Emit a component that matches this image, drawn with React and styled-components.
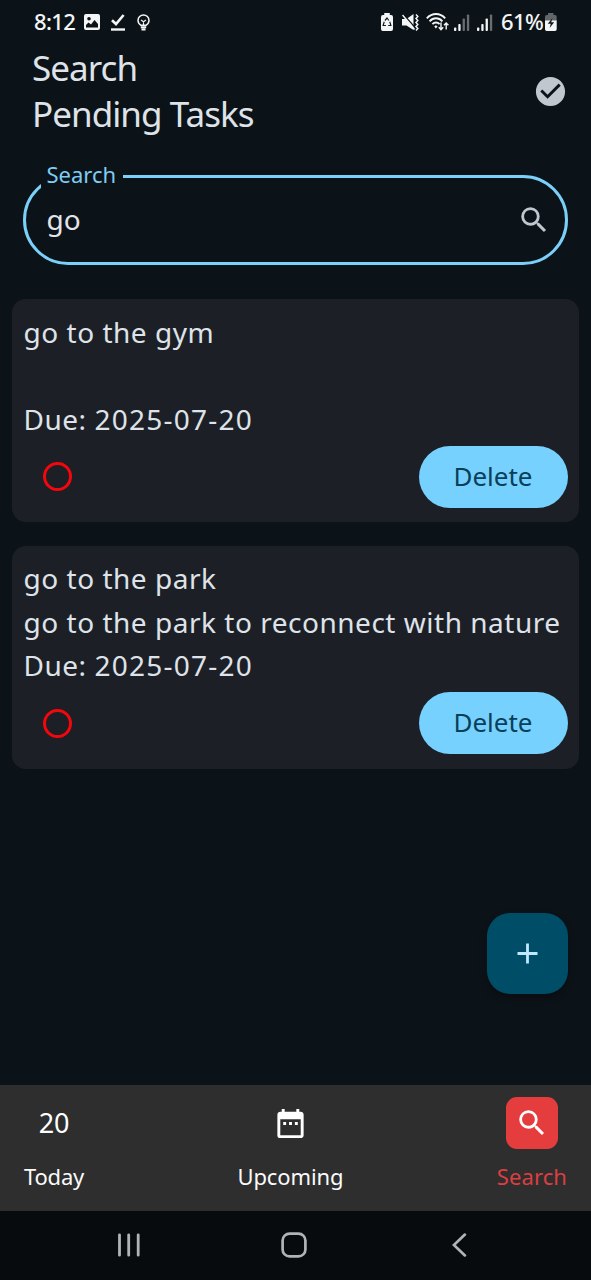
import React from "react";
import styled, { createGlobalStyle } from "styled-components";
import { MdSearch, MdCheckCircle, MdDateRange } from "react-icons/md";

const GlobalStyle = createGlobalStyle`
  * { box-sizing: border-box; }
  body { margin: 0; background: #0c1318; }
`;

const Screen = styled.div`
  width: 591px;
  height: 1280px;
  display: flex;
  flex-direction: column;
  overflow: hidden;
  background: #0c1318;
  color: #dfe3e9;
  font-family: "Noto Sans", "Open Sans", sans-serif;
`;

const StatusBar = styled.header`
  display: flex;
  justify-content: space-between;
  align-items: center;
  height: 44px;
  flex: none;
  padding: 0 34px;
  color: #f3f5f6;
`;

const StatusGroup = styled.div`
  display: flex;
  align-items: center;
  height: 44px;
  svg { display: block; flex: none; }
`;

const StatusText = styled.span`
  font-size: 22px;
  line-height: 42px;
  height: 44px;
  font-weight: 500;
  letter-spacing: -0.6px;
  width: ${(p) => p.$width}px;
  white-space: nowrap;
`;

const TitleBar = styled.div`
  display: flex;
  justify-content: space-between;
  align-items: center;
  height: 92px;
  flex: none;
  padding: 3px 23px 0 32px;
  svg { color: #c1c7ce; }
`;

const Title = styled.h1`
  margin: -2px 0 0;
  font-size: 35px;
  line-height: 46px;
  font-weight: 400;
  letter-spacing: -0.95px;
`;

const Field = styled.div`
  position: relative;
  display: flex;
  align-items: center;
  justify-content: space-between;
  flex: none;
  height: 90px;
  margin: 39px 23px 0;
  padding: 0 14.5px 0 20.5px;
  border: 3px solid #7bd0fa;
  border-radius: 45px;
  color: #c1c7ce;
`;

const FieldLabel = styled.label`
  position: absolute;
  left: 15px;
  top: -17px;
  height: 27px;
  padding: 0 0 0 5.5px;
  width: 82px;
  background: #0c1318;
  color: #7fcdf3;
  font-size: 22px;
  line-height: 26px;
`;

const FieldValue = styled.span`
  margin-top: -2px;
  color: #e2e5ea;
  font-size: 28px;
  line-height: 40px;
`;

const TaskList = styled.main`
  display: flex;
  flex-direction: column;
  gap: 23.5px;
  flex: 1;
  padding: 34px 12px 0 11.5px;
`;

const Card = styled.article`
  height: 223px;
  padding: 11.5px 11px 13px 12px;
  border-radius: 14px;
  background: #1c2026;
`;

const CardLine = styled.p`
  margin: 0;
  height: 43.6px;
  font-size: 28px;
  line-height: 43.6px;
  letter-spacing: 0.52px;
  white-space: nowrap;
`;

const DueDate = styled.time`
  letter-spacing: 1.25px;
`;

const CardActions = styled.div`
  display: flex;
  justify-content: space-between;
  align-items: center;
  margin-top: 4.5px;
  padding-left: 19.5px;
`;

const TaskCheck = styled.button`
  width: 29px;
  height: 29px;
  padding: 0;
  border: 3px solid #f3070c;
  border-radius: 50%;
  background: none;
`;

const DeleteButton = styled.button`
  width: 149px;
  height: 62px;
  padding: 0 1px 1px 0;
  border: 0;
  border-radius: 31px;
  background: #76d1ff;
  color: #0a3f5a;
  font: 400 26px/59px "Noto Sans", sans-serif;
`;

const FabRow = styled.div`
  display: flex;
  justify-content: flex-end;
  flex: none;
  padding: 0 23px 91.5px;
`;

const Fab = styled.button`
  display: flex;
  align-items: center;
  justify-content: center;
  width: 81px;
  height: 81px;
  padding: 1px 0 0;
  border: 0;
  border-radius: 23px;
  background: #004d68;
  color: #c2e8ff;
  box-shadow: 0 4px 7px rgba(0, 0, 0, 0.35);
`;

const TabBar = styled.nav`
  display: flex;
  justify-content: space-between;
  flex: none;
  height: 126px;
  padding: 12px 24px 0;
  background: #2e2e2e;
`;

const Tab = styled.a`
  display: flex;
  flex-direction: column;
  align-items: center;
  color: ${(p) => (p.$active ? "#dc3f42" : "#fafafa")};
  font-size: 22px;
  line-height: 30px;
  letter-spacing: ${(p) => p.$tracking || 0}px;
`;

const TabIcon = styled.span`
  display: flex;
  align-items: center;
  justify-content: center;
  width: 52px;
  height: 52px;
  margin-bottom: 12px;
  border-radius: 11px;
  background: ${(p) => (p.$active ? "#e53d3e" : "transparent")};
  color: #fff;
  font-size: 27px;
`;

const SystemBar = styled.footer`
  display: flex;
  justify-content: space-between;
  align-items: center;
  flex: none;
  height: 69px;
  padding: 0 123px 2px 116px;
  background: #070b0e;
  color: #b1b4b6;
`;

const ImageIcon = () => (
  <svg width="16" height="16" viewBox="0 0 16 16">
    <path fill="currentColor" fillRule="evenodd" d="M2 0h12a2 2 0 0 1 2 2v12a2 2 0 0 1-2 2H2a2 2 0 0 1-2-2V2a2 2 0 0 1 2-2ZM5 3a1.8 1.8 0 1 0 0 3.6A1.8 1.8 0 0 0 5 3ZM2 13.5h12V10l-3.5-4L7 10.5 4.500 8.500 2 11Z" />
  </svg>
);

const DoneIcon = () => (
  <svg width="16" height="17" viewBox="0 0 16 17" fill="none" stroke="currentColor">
    <path d="M2 6.300l4 3.700L13.600 1" strokeWidth="2.600" />
    <path d="M1 15.500h14" strokeWidth="2.400" />
  </svg>
);

const BulbIcon = () => (
  <svg width="13" height="17" viewBox="0 0 13 17" fill="none" stroke="currentColor">
    <path d="M4 11.300C2 10 1 8.400 1 6.400a5.500 5.500 0 0 1 11 0c0 2-1 3.600-3 4.900Z" strokeWidth="1.500" />
    <path d="M4 6l2.500 1.800L9 6M6.500 7.500v3.500" strokeWidth="1.100" />
    <path d="M3.800 13.200h5.400M4.500 15.500h4" strokeWidth="1.900" />
  </svg>
);

const BatteryCareIcon = () => (
  <svg width="12" height="18" viewBox="0 0 13 18" preserveAspectRatio="none">
    <path fill="currentColor" d="M3.500 0h6v2H11a2 2 0 0 1 2 2v12a2 2 0 0 1-2 2H2a2 2 0 0 1-2-2V4a2 2 0 0 1 2-2h1.500Z" />
    <path d="M4.300 7.500L6.500 5l2 2.500M9.500 8.800l1.200 3.700H7.800M5.300 12.500h-3l1.200-3.700" fill="none" stroke="#0c1318" strokeWidth="1.200" />
  </svg>
);

const MuteIcon = () => (
  <svg width="17" height="17" viewBox="0 0 17 17">
    <path fill="currentColor" d="M0 5h4.500L11.500 0v16L4.500 11.500H0Z" />
    <path d="M1 0l12.500 14" stroke="#0c1318" strokeWidth="1.300" />
    <path d="M.5 1L12.500 15.500" stroke="currentColor" strokeWidth="1.500" />
    <path d="M14 .5l1.800 2-1.800 2 1.800 2-1.800 2 1.800 2-1.800 2 1.800 2-1.800 2" fill="none" stroke="currentColor" strokeWidth="1.500" />
  </svg>
);

const WifiIcon = () => (
  <svg width="23" height="18" viewBox="0 0 23 18" fill="none" stroke="currentColor">
    <path d="M.8 5.300C6-0.400 14-.4 19.200 5.300M3.600 8.300c3.600-4 9.200-4 12.800 0M6.400 11.200c2.200-2.300 5-2.300 7.200 0" strokeWidth="1.900" />
    <path d="M8.200 13.400l1.700-1.200 1.700 1.200-1.700 2Z" fill="currentColor" stroke="none" />
    <path d="M15 9.500v7M12.800 14.300l2.200 2.500 2.200-2.500M20.200 16.500V10M18 12.300L20.200 10l2.200 2.300" strokeWidth="1.400" />
  </svg>
);

const SignalIcon = ({ level }) => (
  <svg width="16" height="17" viewBox="0 0 16 17" fill="currentColor">
    {[3.5, 7, 12.500, 16.500].map((h, i) => (
      <rect key={h} x={i * 4.300} y={17 - h} width="2.300" height={h} rx="0.800" opacity={i < level ? 1 : 0.4} />
    ))}
  </svg>
);

const ChargingIcon = () => (
  <svg width="12" height="18" viewBox="0 0 12 18">
    <path fill="#626669" d="M3 0h5.500v2H10a1.700 1.700 0 0 1 1.700 1.700V8H0V3.700A1.700 1.700 0 0 1 1.700 2H3Z" />
    <path fill="currentColor" d="M0 7.500h11.700v8.800A1.700 1.700 0 0 1 10 18H1.700A1.700 1.700 0 0 1 0 16.300Z" />
    <path fill="#0c1318" d="M7.500 5L2.800 10.700h3L4.600 15l4.600-5.700h-3Z" />
  </svg>
);

const PlusIcon = () => (
  <svg width="21" height="21" viewBox="0 0 21 21" stroke="currentColor" strokeWidth="2.800">
    <path d="M10.500 .5v20M.5 10.500h20" />
  </svg>
);

const RecentsIcon = () => (
  <svg width="26" height="24" viewBox="0 0 26 24" stroke="currentColor" strokeWidth="2.800" strokeLinecap="round">
    <path d="M3.500 1.800v20.400M12.700 1.800v20.400M22.200 1.800v20.400" />
  </svg>
);

const HomeIcon = () => (
  <svg width="32" height="26" viewBox="0 0 32 26" fill="none" stroke="currentColor" strokeWidth="2.700">
    <rect x="1.600" y="1.600" width="22.800" height="22.800" rx="7" />
  </svg>
);

const BackIcon = () => (
  <svg width="16" height="24" viewBox="0 0 16 24" fill="none" stroke="currentColor" strokeWidth="2.700" strokeLinecap="round">
    <path d="M12.900 1.600L1.900 12l11 10.400" />
  </svg>
);

const StatusGap = styled.i`
  flex: none;
  width: ${(p) => p.$size}px;
`;

const tasks = [
  { title: "go to the gym", description: "", due: "2025-07-20" },
  { title: "go to the park", description: "go to the park to reconnect with nature", due: "2025-07-20" },
];

const TaskCard = ({ task }) => (
  <Card>
    <CardLine>{task.title}</CardLine>
    <CardLine>{task.description}</CardLine>
    <CardLine>Due: <DueDate>{task.due}</DueDate></CardLine>
    <CardActions>
      <TaskCheck aria-label="Complete task" />
      <DeleteButton>Delete</DeleteButton>
    </CardActions>
  </Card>
);

export default function App() {
  return (
    <Screen>
      <GlobalStyle />
      <StatusBar>
        <StatusGroup>
          <StatusText $width={50}>8:12</StatusText>
          <ImageIcon />
          <StatusGap $size={10} />
          <DoneIcon />
          <StatusGap $size={11} />
          <BulbIcon />
        </StatusGroup>
        <StatusGroup>
          <BatteryCareIcon />
          <StatusGap $size={9} />
          <MuteIcon />
          <StatusGap $size={7} />
          <WifiIcon />
          <StatusGap $size={5} />
          <SignalIcon level={2} />
          <StatusGap $size={7} />
          <SignalIcon level={3} />
          <StatusGap $size={8} />
          <StatusText $width={44}>61%</StatusText>
          <ChargingIcon />
        </StatusGroup>
      </StatusBar>
      <TitleBar>
        <Title>Search<br />Pending Tasks</Title>
        <MdCheckCircle size={35} />
      </TitleBar>
      <Field>
        <FieldLabel>Search</FieldLabel>
        <FieldValue>go</FieldValue>
        <MdSearch size={34} />
      </Field>
      <TaskList>
        {tasks.map((task) => (
          <TaskCard key={task.title} task={task} />
        ))}
      </TaskList>
      <FabRow>
        <Fab aria-label="Add task"><PlusIcon /></Fab>
      </FabRow>
      <TabBar>
        <Tab $tracking={-0.2}>
          <TabIcon>20</TabIcon>
          Today
        </Tab>
        <Tab $tracking={-0.1}>
          <TabIcon><MdDateRange size={35} /></TabIcon>
          Upcoming
        </Tab>
        <Tab $active $tracking={0.1}>
          <TabIcon $active><MdSearch size={34} /></TabIcon>
          Search
        </Tab>
      </TabBar>
      <SystemBar>
        <RecentsIcon />
        <HomeIcon />
        <BackIcon />
      </SystemBar>
    </Screen>
  );
}
